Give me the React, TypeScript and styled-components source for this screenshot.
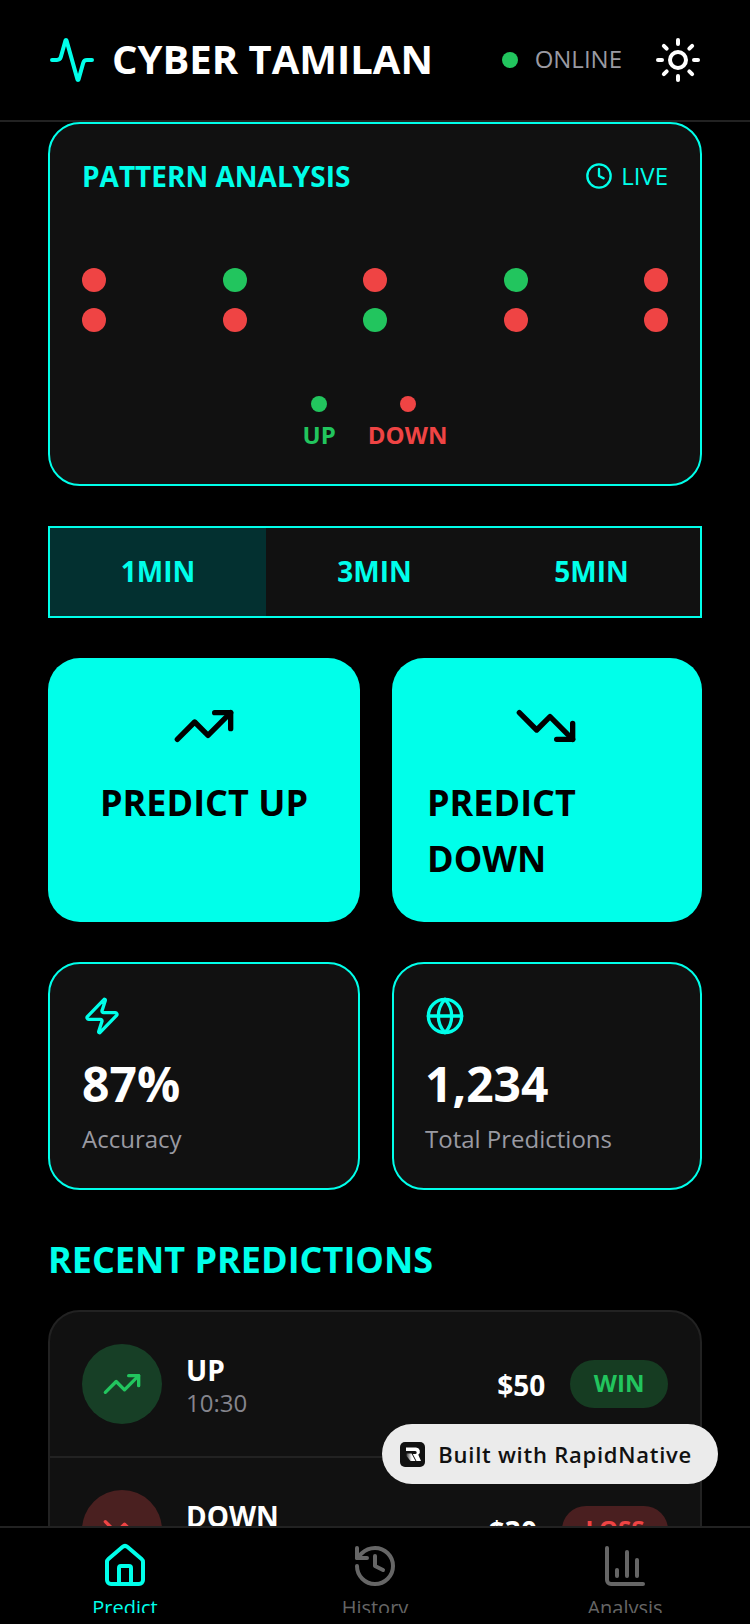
import React from 'react';
import styled, { createGlobalStyle } from 'styled-components';
import { Activity, Sun, Clock, TrendingUp, TrendingDown, Zap, Globe, House, History, ChartColumn } from 'lucide-react';

const CYAN = '#00ffea';
const GREEN = '#22c55e';
const RED = '#ef4444';
const MUTED = '#9a9aa2';

const Global = createGlobalStyle`
  html, body { margin: 0; padding: 0; background: #000; }
  * { box-sizing: border-box; }
  body { font-family: "Open Sans", "Noto Sans", sans-serif; }
  svg { flex: none; }
`;

const Screen = styled.div`
  position: relative;
  width: 750px;
  height: 1624px;
  background: #000;
  display: flex;
  flex-direction: column;
  overflow: hidden;
`;

const Header = styled.header`
  height: 122px;
  flex: none;
  padding: 0 48px;
  border-bottom: 2px solid #222;
  display: flex;
  align-items: center;
  justify-content: space-between;
`;

const Brand = styled.div`
  display: flex;
  align-items: center;
  gap: 16px;
`;

const BrandName = styled.h1`
  margin: 0 0 2px;
  color: #fff;
  font-size: 40px;
  line-height: 54px;
  font-weight: 700;
`;

const Status = styled.div`
  display: flex;
  align-items: center;
`;

const StatusDot = styled.span`
  width: 16px;
  height: 16px;
  border-radius: 50%;
  background: ${GREEN};
  margin-right: 17px;
`;

const StatusText = styled.span`
  color: ${MUTED};
  font-size: 24px;
  line-height: 32px;
  margin: 0 32px 2px 0;
`;

const Main = styled.main`
  flex: 1;
  min-height: 0;
  overflow: hidden;
  padding: 0 48px;
  display: flex;
  flex-direction: column;
`;

const PatternCard = styled.section`
  flex: none;
  height: 364px;
  background: #111;
  border: 2px solid ${CYAN};
  border-radius: 32px;
  padding: 32px;
`;

const CardHead = styled.div`
  display: flex;
  align-items: center;
  justify-content: space-between;
`;

const CardTitle = styled.h2`
  margin: 0;
  color: ${CYAN};
  font-size: 28px;
  line-height: 40px;
  font-weight: 700;
`;

const Live = styled.div`
  display: flex;
  align-items: center;
  gap: 8px;
  color: ${CYAN};
  font-size: 24px;
  line-height: 32px;
`;

const PatternRows = styled.div`
  display: flex;
  justify-content: space-between;
  margin-top: 72px;
`;

const PatternColumn = styled.div`
  display: flex;
  flex-direction: column;
  gap: 16px;
`;

const Dot = styled.span<{ $up: boolean; $size: number }>`
  display: block;
  width: ${p => p.$size}px;
  height: ${p => p.$size}px;
  border-radius: 50%;
  background: ${p => (p.$up ? GREEN : RED)};
`;

const Legend = styled.div`
  display: flex;
  justify-content: center;
  gap: 32px;
  margin-top: 64px;
`;

const LegendItem = styled.div`
  display: flex;
  flex-direction: column;
  align-items: center;
  gap: 7px;
`;

const LegendLabel = styled.span<{ $up: boolean }>`
  color: ${p => (p.$up ? GREEN : RED)};
  font-size: 24px;
  line-height: 32px;
  font-weight: 700;
`;

const Tabs = styled.div`
  flex: none;
  margin-top: 40px;
  height: 92px;
  display: flex;
  background: #111;
  border: 2px solid ${CYAN};
`;

const Tab = styled.div<{ $active?: boolean }>`
  flex: 1;
  display: flex;
  align-items: center;
  justify-content: center;
  padding-bottom: 2px;
  color: ${CYAN};
  font-size: 28px;
  font-weight: 700;
  background: ${p => (p.$active ? '#033030' : 'transparent')};
  &:first-child { flex: 0 0 216px; }
`;

const Pair = styled.div`
  flex: none;
  margin-top: 40px;
  display: flex;
  gap: 32px;
  & > :first-child { flex: 0 0 312px; }
`;

const PredictButton = styled.button`
  flex: 1 1 0;
  min-width: 0;
  padding: 36px 36px 35px;
  border: none;
  border-radius: 32px;
  background: ${CYAN};
  color: #000;
  display: flex;
  flex-direction: column;
  align-items: center;
  font-family: inherit;
  &:last-child { padding-left: 35px; padding-right: 37px; }
`;

const PredictLabel = styled.span`
  margin-top: 17px;
  font-size: 36px;
  line-height: 56px;
  font-weight: 700;
  text-align: left;
`;

const StatCard = styled.div`
  flex: 1 1 0;
  min-width: 0;
  height: 228px;
  padding: 32px;
  background: #111;
  border: 2px solid ${CYAN};
  border-radius: 32px;
  color: ${CYAN};
  &:last-child { padding-left: 31px; }
`;

const StatValue = styled.div`
  margin-top: 10px;
  color: #fff;
  font-size: 48px;
  line-height: 65px;
  font-weight: 700;
`;

const StatLabel = styled.div`
  margin-top: 6px;
  color: ${MUTED};
  font-size: 24px;
  line-height: 33px;
`;

const SectionTitle = styled.h2`
  margin: 45px 0 25px;
  color: ${CYAN};
  font-size: 36px;
  line-height: 50px;
  font-weight: 700;
`;

const ListCard = styled.section`
  flex: none;
  background: #111;
  border: 2px solid #222;
  border-radius: 32px;
`;

const Row = styled.div`
  display: flex;
  align-items: center;
  padding: 32px;
  & + & { border-top: 2px solid #222; }
`;

const RowIcon = styled.div<{ $up: boolean }>`
  width: 80px;
  height: 80px;
  flex: none;
  border-radius: 50%;
  display: flex;
  align-items: center;
  justify-content: center;
  color: ${p => (p.$up ? GREEN : RED)};
  background: ${p => (p.$up ? '#173f26' : '#4a2020')};
`;

const RowMain = styled.div`
  flex: 1;
  margin-left: 24px;
`;

const RowTitle = styled.div`
  margin-top: 1px;
  color: #fff;
  font-size: 28px;
  line-height: 38px;
  font-weight: 700;
`;

const RowTime = styled.div`
  margin-top: -3px;
  color: #85858d;
  font-size: 24px;
  line-height: 33px;
`;

const Amount = styled.div`
  padding-top: 2px;
  color: #fff;
  font-size: 28px;
  font-weight: 700;
  margin-right: 25px;
`;

const Pill = styled.div<{ $up: boolean }>`
  height: 48px;
  padding: 0 23.5px 3px;
  border-radius: 24px;
  display: flex;
  align-items: center;
  font-size: 24px;
  font-weight: 700;
  color: ${p => (p.$up ? GREEN : RED)};
  background: ${p => (p.$up ? '#163c22' : '#4a1f20')};
`;

const Nav = styled.nav`
  flex: none;
  height: 98px;
  border-top: 2px solid #222;
  background: #000;
  padding: 14px 0 11px;
  display: flex;
`;

const NavItem = styled.div<{ $active?: boolean }>`
  flex: 1;
  overflow: hidden;
  display: flex;
  flex-direction: column;
  align-items: center;
  color: ${p => (p.$active ? CYAN : '#666')};
`;

const NavLabel = styled.span`
  margin-top: 4px;
  font-size: 20px;
  line-height: 27px;
`;

const Badge = styled.div`
  position: absolute;
  right: 32px;
  bottom: 140px;
  height: 60px;
  padding: 0 26px 0 18px;
  border-radius: 30px;
  background: #ebebeb;
  display: flex;
  align-items: center;
  gap: 13px;
  color: #111;
  font-size: 22px;
  font-weight: 600;
  letter-spacing: 0.75px;
`;

const pattern = [
  [false, false],
  [true, false],
  [false, true],
  [true, false],
  [false, false],
];

const Logo = () => (
  <svg width="25" height="25" viewBox="0 0 25 25" aria-hidden="true">
    <defs>
      <linearGradient id="lg" x1="0" y1="0.6" x2="0.6" y2="0.6">
        <stop offset="0" stopColor="#444" />
        <stop offset="1" stopColor="#fff" />
      </linearGradient>
    </defs>
    <rect width="25" height="25" rx="5" fill="#111" />
    <path d="M6 5.5h10a4 4 0 0 1 2.3 7.2l2.7 6.3h-4.5l-3.7-7h2.4a1.2 1.2 0 0 0 0-3H6z" fill="#fff" />
    <path d="M6.5 11.5h5l4 7.5h-5l-4-5z" fill="url(#lg)" />
  </svg>
);

export default function App() {
  return (
    <Screen>
      <Global />
      <Header>
        <Brand>
          <Activity size={48} color={CYAN} strokeWidth={2} />
          <BrandName>CYBER TAMILAN</BrandName>
        </Brand>
        <Status>
          <StatusDot />
          <StatusText>ONLINE</StatusText>
          <Sun size={48} color="#fff" strokeWidth={2} />
        </Status>
      </Header>
      <Main>
        <PatternCard>
          <CardHead>
            <CardTitle>PATTERN ANALYSIS</CardTitle>
            <Live>
              <Clock size={28} strokeWidth={2} />
              LIVE
            </Live>
          </CardHead>
          <PatternRows>
            {pattern.map((col, i) => (
              <PatternColumn key={i}>
                {col.map((up, j) => (
                  <Dot key={j} $up={up} $size={24} />
                ))}
              </PatternColumn>
            ))}
          </PatternRows>
          <Legend>
            <LegendItem>
              <Dot $up $size={16} />
              <LegendLabel $up>UP</LegendLabel>
            </LegendItem>
            <LegendItem>
              <Dot $up={false} $size={16} />
              <LegendLabel $up={false}>DOWN</LegendLabel>
            </LegendItem>
          </Legend>
        </PatternCard>

        <Tabs>
          <Tab $active>1MIN</Tab>
          <Tab>3MIN</Tab>
          <Tab>5MIN</Tab>
        </Tabs>

        <Pair>
          <PredictButton>
            <TrendingUp size={64} strokeWidth={2} />
            <PredictLabel>PREDICT UP</PredictLabel>
          </PredictButton>
          <PredictButton>
            <TrendingDown size={64} strokeWidth={2} />
            <PredictLabel>PREDICT DOWN</PredictLabel>
          </PredictButton>
        </Pair>

        <Pair>
          <StatCard>
            <Zap size={40} strokeWidth={2} />
            <StatValue>87%</StatValue>
            <StatLabel>Accuracy</StatLabel>
          </StatCard>
          <StatCard>
            <Globe size={40} strokeWidth={2} />
            <StatValue>1,234</StatValue>
            <StatLabel>Total Predictions</StatLabel>
          </StatCard>
        </Pair>

        <SectionTitle>RECENT PREDICTIONS</SectionTitle>
        <ListCard>
          <Row>
            <RowIcon $up><TrendingUp size={40} strokeWidth={2} /></RowIcon>
            <RowMain>
              <RowTitle>UP</RowTitle>
              <RowTime>10:30</RowTime>
            </RowMain>
            <Amount>$50</Amount>
            <Pill $up>WIN</Pill>
          </Row>
          <Row>
            <RowIcon $up={false}><TrendingDown size={40} strokeWidth={2} /></RowIcon>
            <RowMain>
              <RowTitle>DOWN</RowTitle>
              <RowTime>10:25</RowTime>
            </RowMain>
            <Amount>$30</Amount>
            <Pill $up={false}>LOSS</Pill>
          </Row>
        </ListCard>
      </Main>
      <Nav>
        <NavItem $active>
          <House size={48} strokeWidth={2} />
          <NavLabel>Predict</NavLabel>
        </NavItem>
        <NavItem>
          <History size={48} strokeWidth={2} />
          <NavLabel>History</NavLabel>
        </NavItem>
        <NavItem>
          <ChartColumn size={48} strokeWidth={2} />
          <NavLabel>Analysis</NavLabel>
        </NavItem>
      </Nav>
      <Badge>
        <Logo />
        Built with RapidNative
      </Badge>
    </Screen>
  );
}
